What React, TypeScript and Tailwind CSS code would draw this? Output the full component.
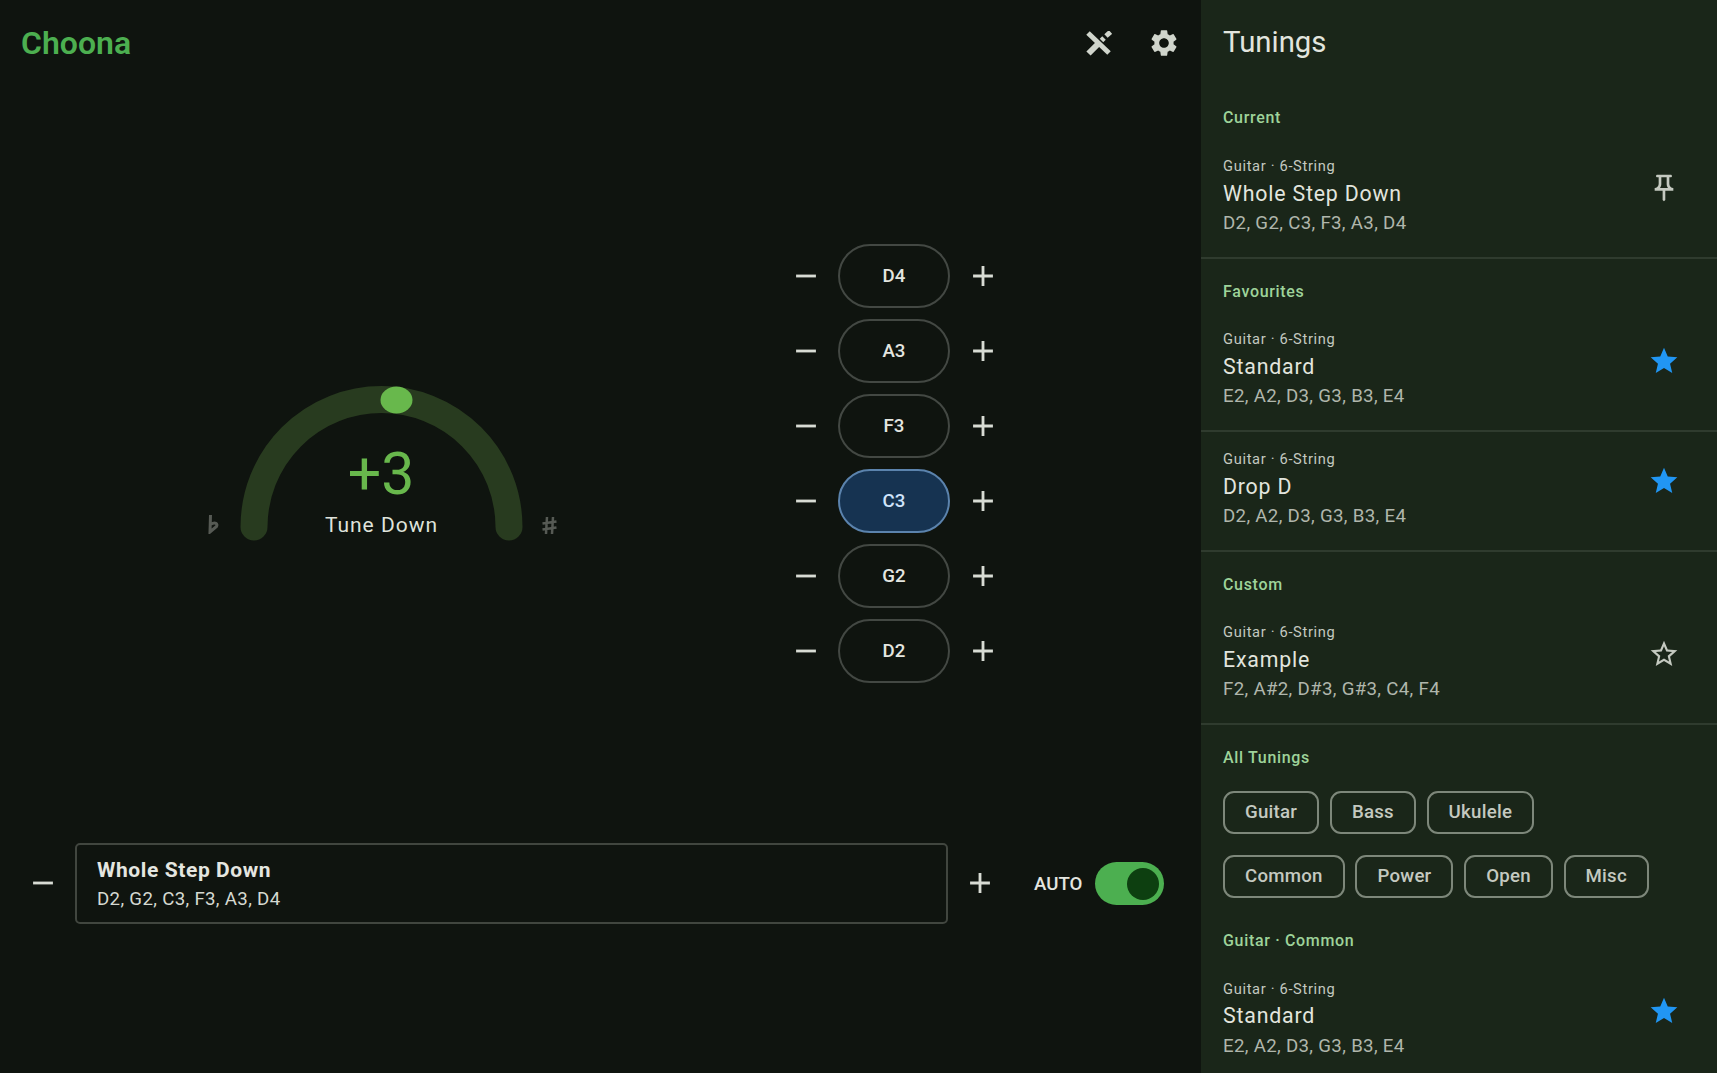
import React from "react";
import { MdSettings, MdOutlinePushPin, MdStar, MdStarBorder, MdAdd, MdRemove } from "react-icons/md";

const font = { fontFamily: "Roboto, sans-serif" };

function ToolsIcon() {
  return (
    <svg viewBox="0 0 26 25" className="w-[26px] h-[25px]" fill="none" stroke="#d0d5cc">
      <path d="M2 2 23 22" strokeWidth="5" />
      <path d="M2.500 22.500 14 11" strokeWidth="6" />
      <path d="M15.500 9.500 18 7" strokeWidth="5" />
      <path d="M20 5 24.500 1" strokeWidth="5" />
    </svg>
  );
}

function FlatIcon() {
  return (
    <svg viewBox="0 0 11 19" className="w-[11px] h-[19px]" fill="none" stroke="#565a54" strokeWidth="3">
      <path d="M2.500 0 2 17 8.500 11.500C10 9 7.500 6.500 2.500 9.500" />
    </svg>
  );
}

function SharpIcon() {
  return (
    <svg viewBox="0 0 15 17" className="w-[15px] h-[17px]" fill="none" stroke="#565a54" strokeWidth="2.500">
      <path d="M5 0 4 17M11 0 10 17M0.500 6.500 14.500 4.500M0.500 12.500 14.500 10.500" />
    </svg>
  );
}

function StringRow({ note, active }: { note: string; active?: boolean }) {
  return (
    <div className="flex items-center">
      <MdRemove className="text-[#d8dcd4] mr-[15px]" size={34} />
      <div className={"w-[112px] h-[64px] rounded-full border-2 flex items-center justify-center text-[18.67px] font-medium " + (active ? "bg-[#163351] border-[#5b83ad] text-[#cfe4fb]" : "border-[#434843] text-[#e4e6e0]")}>
        {note}
      </div>
      <MdAdd className="text-[#d8dcd4] ml-[16px]" size={34} />
    </div>
  );
}

function Dial() {
  return (
    <div className="relative w-[340px] h-[170px]">
      <svg viewBox="0 0 340 170" className="absolute inset-0 w-[340px] h-[170px]">
        <path d="M43 142 A127.500 127.500 0 0 1 298 142" fill="none" stroke="#283b1f" strokeWidth="27" strokeLinecap="round" />
        <ellipse cx="185.500" cy="15" rx="16" ry="13.500" fill="#68b84c" />
      </svg>
      <div className="absolute top-[54px] left-0 right-0 text-center text-[59px] leading-[70px] text-[#68b84c]">+3</div>
      <div className="absolute top-[124px] left-[1px] right-0 text-center text-[21px] leading-[32px] tracking-[1px] text-[#dfe3db]">Tune Down</div>
      <div className="absolute top-[130px] left-[-3px]"><FlatIcon /></div>
      <div className="absolute top-[132px] right-[-6px]"><SharpIcon /></div>
    </div>
  );
}

function SectionHeader({ children, className = "" }: { children: React.ReactNode; className?: string }) {
  return <div className={"shrink-0 px-[22px] text-[16px] leading-[22px] font-medium tracking-[0.67px] text-[#9ed39a] " + className}>{children}</div>;
}

function Item({ cat = "Guitar · 6-String", title, notes, icon }: { cat?: string; title: string; notes: string; icon: React.ReactNode }) {
  return (
    <div className="shrink-0 flex items-start justify-between pl-[22px] pr-[37.500px] h-[118px] pt-[17px]">
      <div>
        <div className="text-[14.67px] leading-[20.500px] tracking-[0.67px] text-[#c4c9c0]">{cat}</div>
        <div className="text-[21.33px] leading-[34.500px] tracking-[0.8px] text-[#e2e5de]">{title}</div>
        <div className="text-[18.67px] leading-[24px] tracking-[0.33px] text-[#b0b6ac]">{notes}</div>
      </div>
      <div className="mt-[16px]">{icon}</div>
    </div>
  );
}

const Divider = () => <div className="shrink-0 h-[2px] bg-[#2f3b2e]" />;
const Star = () => <MdStar className="text-[#2196f3]" size={32} />;
const StarO = () => <MdStarBorder className="text-[#c4c9c0]" size={32} />;
const Pin = () => <MdOutlinePushPin className="text-[#c4c9c0]" size={32} />;

function Chip({ label }: { label: string }) {
  return <div className="h-[42.67px] px-[20px] flex items-center rounded-[11px] border-2 border-[#7d877a] text-[18.67px] font-medium tracking-[0.25px] text-[#c4c9c0]">{label}</div>;
}

export default function App() {
  return (
    <div className="flex h-screen overflow-hidden bg-[#0f140f]" style={font}>
      <main className="w-[1201px] shrink-0 flex flex-col">
        <header className="h-[86px] flex items-center justify-between pl-[21px] pr-[21px]">
          <div className="text-[32px] font-semibold text-[#4caf50]">Choona</div>
          <div className="flex items-center gap-[36px]">
            <ToolsIcon />
            <MdSettings className="text-[#d0d5cc]" size={32} />
          </div>
        </header>
        <div className="flex-1 flex">
          <div className="w-[789px] flex items-center pl-[211px] pt-[11px]"><Dial /></div>
          <div className="flex flex-col gap-[11px] pt-[158px]">
            {["D4", "A3", "F3", "C3", "G2", "D2"].map((n) => <StringRow key={n} note={n} active={n === "C3"} />)}
          </div>
        </div>
        <div className="h-[230px] flex items-start">
          <MdRemove className="text-[#d8dcd4] ml-[26px] mt-[23px]" size={34} />
          <div className="ml-[15px] w-[873px] h-[81px] border-2 border-[#41463f] rounded-[5px] pl-[20px] flex flex-col justify-center">
            <div className="text-[21px] leading-[30px] font-bold tracking-[0.6px] text-[#e4e6e0]">Whole Step Down</div>
            <div className="text-[18.67px] leading-[28px] tracking-[0.33px] text-[#d5d9d1]">D2, G2, C3, F3, A3, D4</div>
          </div>
          <MdAdd className="text-[#d8dcd4] ml-[15px] mt-[23px]" size={34} />
          <div className="ml-[37px] h-[81px] flex items-center text-[18.67px] font-medium text-[#e4e6e0]">AUTO</div>
          <div className="ml-[13px] mt-[19px] w-[69px] h-[43px] rounded-full bg-[#4caf50] flex items-center justify-end pr-[5px]">
            <div className="w-[32px] h-[32px] rounded-full bg-[#0d3f10]" />
          </div>
        </div>
      </main>
      <aside className="flex-1 bg-[#1a2619] flex flex-col overflow-hidden">
        <div className="h-[86px] shrink-0 px-[22px] flex items-center text-[29.33px] text-[#e2e5de]">Tunings</div>
        <SectionHeader className="mt-[21px]">Current</SectionHeader>
        <div className="mt-[10px]"><Item title="Whole Step Down" notes="D2, G2, C3, F3, A3, D4" icon={<Pin />} /></div>
        <Divider />
        <SectionHeader className="mt-[22px]">Favourites</SectionHeader>
        <div className="mt-[9px]"><Item title="Standard" notes="E2, A2, D3, G3, B3, E4" icon={<Star />} /></div>
        <Divider />
        <Item title="Drop D" notes="D2, A2, D3, G3, B3, E4" icon={<Star />} />
        <Divider />
        <SectionHeader className="mt-[22px]">Custom</SectionHeader>
        <div className="mt-[9px]"><Item title="Example" notes="F2, A#2, D#3, G#3, C4, F4" icon={<StarO />} /></div>
        <Divider />
        <SectionHeader className="mt-[22px]">All Tunings</SectionHeader>
        <div className="shrink-0 mt-[22px] px-[22px] flex gap-[10.67px]">
          {["Guitar", "Bass", "Ukulele"].map((c) => <Chip key={c} label={c} />)}
        </div>
        <div className="shrink-0 mt-[21.33px] px-[22px] flex gap-[10.67px]">
          {["Common", "Power", "Open", "Misc"].map((c) => <Chip key={c} label={c} />)}
        </div>
        <SectionHeader className="mt-[32px]">Guitar · Common</SectionHeader>
        <div className="mt-[10px] shrink-0"><Item title="Standard" notes="E2, A2, D3, G3, B3, E4" icon={<Star />} /></div>
      </aside>
    </div>
  );
}
